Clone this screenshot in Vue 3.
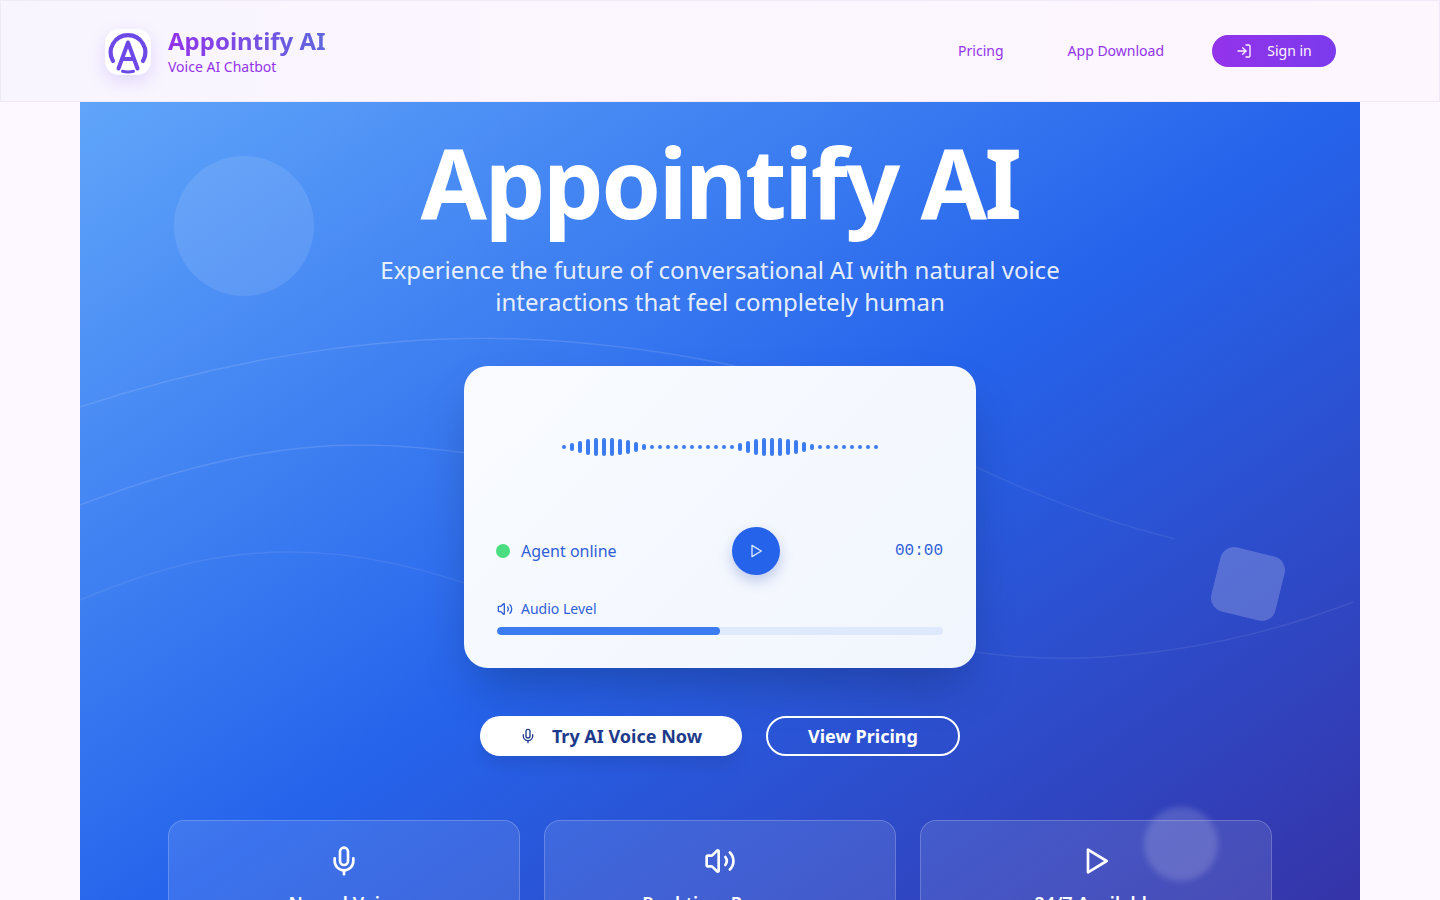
<template>
  <div class="page">
    <header class="topbar">
      <div class="brand">
        <div class="logo">
          <svg width="46" height="46" viewBox="0 0 46 46" fill="none" stroke="#6d4ae8" stroke-linecap="round" stroke-linejoin="round">
            <path d="M8 32A17.300 17.300 0 1 1 38 32" stroke-width="4.200" />
            <path d="M13.500 39.500 23 13.500 32.500 39.500M17 30H29" stroke-width="4" />
            <path d="M17.500 42.300q5.500 1.400 11 0" stroke-width="3" />
          </svg>
        </div>
        <div class="brand-text">
          <div class="brand-name">Appointify AI</div>
          <div class="brand-sub">Voice AI Chatbot</div>
        </div>
      </div>
      <nav class="nav">
        <a class="nav-link">Pricing</a>
        <a class="nav-link">App Download</a>
        <button class="signin">
          <svg width="16" height="16" viewBox="0 0 24 24" fill="none" stroke="currentColor" stroke-width="2" stroke-linecap="round" stroke-linejoin="round">
            <path d="M15 3h4a2 2 0 0 1 2 2v14a2 2 0 0 1-2 2h-4" />
            <path d="m10 17 5-5-5-5" />
            <path d="M15 12H3" />
          </svg>
          <span>Sign in</span>
        </button>
      </nav>
    </header>

    <main class="hero">
      <div class="circle-one"></div>
      <div class="square-one"></div>
      <div class="circle-two"></div>
      <svg class="waves" width="1280" height="600" viewBox="0 0 1280 600" fill="none">
        <path d="M0 305C150 255 310 232 440 237C520 240 590 250 660 265" stroke="#fff" stroke-opacity=".12" stroke-width="1.500" />
        <path d="M0 403C100 365 190 343 280 343C320 343 360 347 400 353" stroke="#fff" stroke-opacity=".12" stroke-width="1.500" />
        <path d="M0 498C90 460 150 450 210 450C280 450 340 466 400 486" stroke="#fff" stroke-opacity=".08" stroke-width="1.500" />
        <path d="M896 365C960 395 1020 418 1095 437" stroke="#fff" stroke-opacity=".07" stroke-width="1.500" />
        <path d="M896 550C930 555 970 557 1003 556C1100 552 1190 532 1273 500" stroke="#fff" stroke-opacity=".08" stroke-width="1.500" />
      </svg>

      <h1 class="title">Appointify AI</h1>
      <p class="lead">Experience the future of conversational AI with natural voice interactions that feel completely human</p>

      <section class="player">
        <div class="wave">
          <span v-for="(h, i) in bars" :key="i" class="bar" :style="{ height: h + 'px' }"></span>
        </div>
        <div class="controls">
          <div class="status">
            <span class="dot"></span>
            <span>Agent online</span>
          </div>
          <button class="play">
            <svg width="16" height="16" viewBox="0 0 24 24" fill="none" stroke="currentColor" stroke-width="2" stroke-linejoin="round">
              <path d="M6 3.500v17L20 12z" />
            </svg>
          </button>
          <div class="timer">00:00</div>
        </div>
        <div class="level">
          <svg width="16" height="16" viewBox="0 0 24 24" fill="none" stroke="currentColor" stroke-width="2" stroke-linecap="round" stroke-linejoin="round">
            <path d="M11 4.700a.7.7 0 0 0-1.200-.5L6.400 7.600A1.400 1.400 0 0 1 5.400 8H3a1 1 0 0 0-1 1v6a1 1 0 0 0 1 1h2.400a1.400 1.400 0 0 1 1 .4l3.400 3.400a.7.7 0 0 0 1.200-.5z" />
            <path d="M16 9a5 5 0 0 1 0 6" />
            <path d="M19.400 18.400a9 9 0 0 0 0-12.800" />
          </svg>
          <span>Audio Level</span>
        </div>
        <div class="track"><div class="fill"></div></div>
      </section>

      <div class="actions">
        <button class="btn-primary">
          <svg width="16" height="16" viewBox="0 0 24 24" fill="none" stroke="currentColor" stroke-width="2" stroke-linecap="round" stroke-linejoin="round">
            <path d="M12 19v3" />
            <path d="M19 10v2a7 7 0 0 1-14 0v-2" />
            <rect x="9" y="2" width="6" height="13" rx="3" />
          </svg>
          <span>Try AI Voice Now</span>
        </button>
        <button class="btn-outline">View Pricing</button>
      </div>

      <div class="features">
        <article class="feature">
          <svg width="32" height="32" viewBox="0 0 24 24" fill="none" stroke="currentColor" stroke-width="2" stroke-linecap="round" stroke-linejoin="round">
            <path d="M12 19v3" />
            <path d="M19 10v2a7 7 0 0 1-14 0v-2" />
            <rect x="9" y="2" width="6" height="13" rx="3" />
          </svg>
          <h3>Neural Voice</h3>
        </article>
        <article class="feature">
          <svg width="32" height="32" viewBox="0 0 24 24" fill="none" stroke="currentColor" stroke-width="2" stroke-linecap="round" stroke-linejoin="round">
            <path d="M11 4.700a.7.7 0 0 0-1.200-.5L6.400 7.600A1.400 1.400 0 0 1 5.400 8H3a1 1 0 0 0-1 1v6a1 1 0 0 0 1 1h2.400a1.400 1.400 0 0 1 1 .4l3.400 3.400a.7.7 0 0 0 1.200-.5z" />
            <path d="M16 9a5 5 0 0 1 0 6" />
            <path d="M19.400 18.400a9 9 0 0 0 0-12.800" />
          </svg>
          <h3>Real-time Process</h3>
        </article>
        <article class="feature">
          <svg width="32" height="32" viewBox="0 0 24 24" fill="none" stroke="currentColor" stroke-width="2" stroke-linejoin="round">
            <path d="M6 3.500v17L20 12z" />
          </svg>
          <h3>24/7 Available</h3>
        </article>
      </div>
    </main>
  </div>
</template>

<script setup>
// two humps, dots (4px) between and after them
const hump = [8, 12, 16, 18, 18, 18, 16, 14, 10, 6]
const dots = (n) => Array(n).fill(4)
const bars = [4, ...hump, ...dots(11), ...hump, ...dots(8)]
</script>

<style>
html,
body {
  margin: 0;
  background: #fdf7ff;
}
</style>

<style scoped>
.page {
  font-family: "Noto Sans", sans-serif;
  background: #fdf7ff;
  height: 900px;
  overflow: hidden;
}

.topbar {
  box-sizing: border-box;
  height: 102px;
  border: 1px solid #f0e9f7;
  background: linear-gradient(90deg, #f9f5ff, #fdf6ff);
  display: flex;
  align-items: center;
  justify-content: space-between;
  padding: 0 103px;
}

.brand {
  display: flex;
  align-items: center;
  gap: 17px;
}

.logo {
  width: 46px;
  height: 46px;
  margin-left: 1px;
  margin-top: 2px;
  border-radius: 14px;
  background: #fff;
  box-shadow: 0 6px 18px rgba(124, 92, 240, 0.2);
}

.logo svg {
  display: block;
}

.brand-name {
  font-size: 24px;
  line-height: 32px;
  font-weight: 700;
  background: linear-gradient(90deg, #9333ea, #5f68dc);
  -webkit-background-clip: text;
  background-clip: text;
  color: transparent;
}

.brand-sub {
  font-size: 14px;
  line-height: 20px;
  color: #9333ea;
}

.nav {
  display: flex;
  align-items: center;
}

.nav-link {
  font-size: 14px;
  color: #9333ea;
  margin: 0 64px 2px 0;
}

.nav-link + .nav-link {
  margin-right: 48px;
}

.signin {
  width: 124px;
  height: 32px;
  border: 0;
  border-radius: 16px;
  background: linear-gradient(90deg, #9333ea, #7c3aed);
  color: #fdf4ff;
  font: 14px "Noto Sans", sans-serif;
  display: flex;
  align-items: center;
  justify-content: center;
  gap: 15px;
  padding: 0;
}

.signin span {
  margin-bottom: 2px;
}

.hero {
  position: relative;
  width: 1280px;
  margin: 0 auto;
  height: 860px;
  overflow: hidden;
  background: linear-gradient(to bottom right, #60a5fa 0%, #2563eb 50%, #3730a3 100%);
  display: flex;
  flex-direction: column;
  align-items: center;
}

.circle-one {
  position: absolute;
  left: 94px;
  top: 54px;
  width: 140px;
  height: 140px;
  border-radius: 50%;
  background: rgba(255, 255, 255, 0.1);
}

.square-one {
  position: absolute;
  left: 1135px;
  top: 449px;
  width: 66px;
  height: 66px;
  border-radius: 14px;
  background: rgba(255, 255, 255, 0.2);
  transform: rotate(14deg);
}

.circle-two {
  position: absolute;
  left: 1064px;
  top: 705px;
  width: 74px;
  height: 74px;
  border-radius: 50%;
  background: rgba(255, 255, 255, 0.16);
  filter: blur(3px);
}

.waves {
  position: absolute;
  left: 0;
  top: 0;
}

.title {
  position: relative;
  flex: none;
  margin: 22px 0 0;
  font-size: 96px;
  line-height: 116px;
  font-weight: 700;
  letter-spacing: -2.400px;
  color: #fff;
}

.lead {
  position: relative;
  flex: none;
  width: 720px;
  margin: 14px 0 0;
  font-size: 24px;
  line-height: 32px;
  text-align: center;
  color: rgba(255, 255, 255, 0.9);
}

.player {
  position: relative;
  flex: none;
  box-sizing: border-box;
  width: 512px;
  height: 302px;
  margin-top: 48px;
  padding: 0 33px;
  border-radius: 24px;
  background: linear-gradient(135deg, #f9fbff, #f1f6fe);
  box-shadow: 0 25px 50px -12px rgba(0, 0, 0, 0.25);
}

.wave {
  height: 161px;
  display: flex;
  align-items: center;
  justify-content: center;
  gap: 4px;
}

.bar {
  width: 4px;
  border-radius: 2px;
  background: #3b7cf0;
}

.controls {
  display: grid;
  grid-template-columns: 1fr auto 1fr;
  align-items: center;
  height: 48px;
}

.status {
  display: flex;
  align-items: center;
  gap: 11px;
  margin-left: -1px;
  font-size: 16px;
  color: #2f5fd8;
}

.dot {
  width: 14px;
  height: 14px;
  border-radius: 50%;
  background: #4ade80;
}

.play {
  width: 48px;
  height: 48px;
  border: 0;
  padding: 0;
  margin-left: 72px;
  border-radius: 50%;
  background: #2563eb;
  color: #dbeafe;
  box-shadow: 0 6px 14px rgba(30, 64, 175, 0.25);
  display: flex;
  align-items: center;
  justify-content: center;
}

.timer {
  justify-self: end;
  font-family: "Liberation Mono", monospace;
  font-size: 16px;
  color: #2f5fd8;
}

.level {
  display: flex;
  align-items: center;
  gap: 8px;
  margin-top: 24px;
  font-size: 14px;
  line-height: 20px;
  color: #2f5fd8;
}

.track {
  height: 8px;
  margin-top: 8px;
  border-radius: 4px;
  background: #dfe9fd;
  overflow: hidden;
}

.fill {
  width: 50%;
  height: 100%;
  border-radius: 4px;
  background: #3b7cf0;
}

.actions {
  position: relative;
  flex: none;
  display: flex;
  gap: 24px;
  margin-top: 48px;
}

.btn-primary,
.btn-outline {
  box-sizing: border-box;
  height: 40px;
  border-radius: 20px;
  font: 700 18px "Noto Sans", sans-serif;
  display: flex;
  align-items: center;
  justify-content: center;
}

.btn-primary {
  width: 262px;
  border: 0;
  background: #fff;
  color: #1e3a8a;
  gap: 16px;
  box-shadow: 0 10px 15px -3px rgba(0, 0, 0, 0.1);
}

.btn-outline {
  width: 194px;
  border: 2px solid #fff;
  background: transparent;
  color: #fff;
}

.features {
  position: relative;
  flex: none;
  display: grid;
  grid-template-columns: repeat(3, 352px);
  gap: 24px;
  margin-top: 64px;
}

.feature {
  box-sizing: border-box;
  height: 200px;
  padding: 24px;
  border: 1px solid rgba(255, 255, 255, 0.2);
  border-radius: 16px;
  background: rgba(255, 255, 255, 0.1);
  color: #fff;
  text-align: center;
}

.feature svg {
  display: block;
  margin: 0 auto;
}

.feature h3 {
  margin: 12px 0 0;
  font-size: 18px;
  line-height: 28px;
  font-weight: 600;
}
</style>
